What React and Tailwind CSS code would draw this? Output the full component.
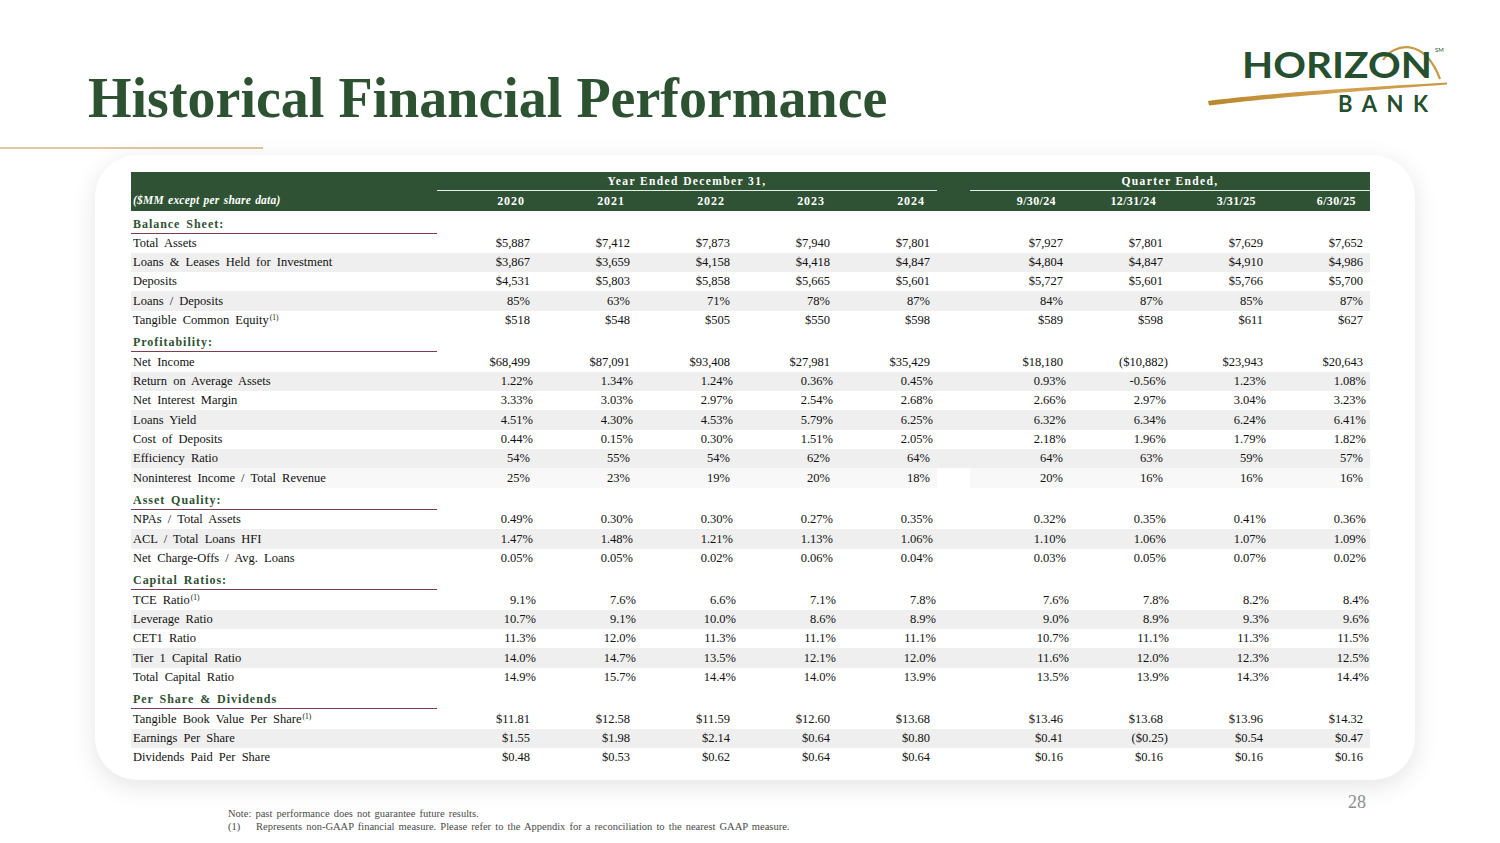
import React from "react";

const sections = [
  {
    name: "Balance Sheet:",
    rows: [
      { label: "Total Assets", values: ["$5,887", "$7,412", "$7,873", "$7,940", "$7,801", "$7,927", "$7,801", "$7,629", "$7,652"] },
      { label: "Loans & Leases Held for Investment", shade: "dark", values: ["$3,867", "$3,659", "$4,158", "$4,418", "$4,847", "$4,804", "$4,847", "$4,910", "$4,986"] },
      { label: "Deposits", values: ["$4,531", "$5,803", "$5,858", "$5,665", "$5,601", "$5,727", "$5,601", "$5,766", "$5,700"] },
      { label: "Loans / Deposits", shade: "dark", values: ["85%", "63%", "71%", "78%", "87%", "84%", "87%", "85%", "87%"] },
      { label: "Tangible Common Equity", sup: true, values: ["$518", "$548", "$505", "$550", "$598", "$589", "$598", "$611", "$627"] },
    ],
  },
  {
    name: "Profitability:",
    rows: [
      { label: "Net Income", values: ["$68,499", "$87,091", "$93,408", "$27,981", "$35,429", "$18,180", "($10,882)", "$23,943", "$20,643"] },
      { label: "Return on Average Assets", shade: "dark", values: ["1.22%", "1.34%", "1.24%", "0.36%", "0.45%", "0.93%", "-0.56%", "1.23%", "1.08%"] },
      { label: "Net Interest Margin", values: ["3.33%", "3.03%", "2.97%", "2.54%", "2.68%", "2.66%", "2.97%", "3.04%", "3.23%"] },
      { label: "Loans Yield", shade: "dark", values: ["4.51%", "4.30%", "4.53%", "5.79%", "6.25%", "6.32%", "6.34%", "6.24%", "6.41%"] },
      { label: "Cost of Deposits", values: ["0.44%", "0.15%", "0.30%", "1.51%", "2.05%", "2.18%", "1.96%", "1.79%", "1.82%"] },
      { label: "Efficiency Ratio", shade: "dark", values: ["54%", "55%", "54%", "62%", "64%", "64%", "63%", "59%", "57%"] },
      { label: "Noninterest Income / Total Revenue", shade: "light", values: ["25%", "23%", "19%", "20%", "18%", "20%", "16%", "16%", "16%"] },
    ],
  },
  {
    name: "Asset Quality:",
    rows: [
      { label: "NPAs / Total Assets", values: ["0.49%", "0.30%", "0.30%", "0.27%", "0.35%", "0.32%", "0.35%", "0.41%", "0.36%"] },
      { label: "ACL / Total Loans HFI", shade: "dark", values: ["1.47%", "1.48%", "1.21%", "1.13%", "1.06%", "1.10%", "1.06%", "1.07%", "1.09%"] },
      { label: "Net Charge-Offs / Avg. Loans", values: ["0.05%", "0.05%", "0.02%", "0.06%", "0.04%", "0.03%", "0.05%", "0.07%", "0.02%"] },
    ],
  },
  {
    name: "Capital Ratios:",
    rows: [
      { label: "TCE Ratio", sup: true, values: ["9.1%", "7.6%", "6.6%", "7.1%", "7.8%", "7.6%", "7.8%", "8.2%", "8.4%"] },
      { label: "Leverage Ratio", shade: "dark", values: ["10.7%", "9.1%", "10.0%", "8.6%", "8.9%", "9.0%", "8.9%", "9.3%", "9.6%"] },
      { label: "CET1 Ratio", values: ["11.3%", "12.0%", "11.3%", "11.1%", "11.1%", "10.7%", "11.1%", "11.3%", "11.5%"] },
      { label: "Tier 1 Capital Ratio", shade: "dark", values: ["14.0%", "14.7%", "13.5%", "12.1%", "12.0%", "11.6%", "12.0%", "12.3%", "12.5%"] },
      { label: "Total Capital Ratio", values: ["14.9%", "15.7%", "14.4%", "14.0%", "13.9%", "13.5%", "13.9%", "14.3%", "14.4%"] },
    ],
  },
  {
    name: "Per Share & Dividends",
    rows: [
      { label: "Tangible Book Value Per Share", sup: true, values: ["$11.81", "$12.58", "$11.59", "$12.60", "$13.68", "$13.46", "$13.68", "$13.96", "$14.32"] },
      { label: "Earnings Per Share", shade: "dark", values: ["$1.55", "$1.98", "$2.14", "$0.64", "$0.80", "$0.41", "($0.25)", "$0.54", "$0.47"] },
      { label: "Dividends Paid Per Share", values: ["$0.48", "$0.53", "$0.62", "$0.64", "$0.64", "$0.16", "$0.16", "$0.16", "$0.16"] },
    ],
  },
];

const years = ["2020", "2021", "2022", "2023", "2024"];
const quarters = ["9/30/24", "12/31/24", "3/31/25", "6/30/25"];

const cols = "grid grid-cols-[306px_repeat(5,100px)_33px_repeat(4,100px)]";

// keeps numbers lined up the way the accounting format does
function pad(v) {
  if (v.startsWith("(")) return "pr-[2px]";
  if (v.startsWith("$")) return "pr-[7px]";
  if (/^\d+%$/.test(v)) return "pr-[7px]";
  if (/^-?\d+\.\d%$/.test(v)) return "pr-[1px]";
  return "pr-[4px]";
}

function Logo() {
  return (
    <svg width="255" height="85" viewBox="0 0 255 85">
      <defs>
        <linearGradient id="swoosh" x1="0" x2="1" y1="0" y2="0">
          <stop offset="0" stopColor="#b7862c" />
          <stop offset="0.55" stopColor="#d3a252" />
          <stop offset="1" stopColor="#c9983f" />
        </linearGradient>
      </defs>
      <path d="M183 25 C 194 8, 224 2, 240 44" fill="none" stroke="#c99a45" strokeWidth="2.2" />
      <text
        x="42"
        y="43"
        fontFamily="Lato, 'Open Sans', sans-serif"
        fontWeight="700"
        fontSize="36"
        fill="#254f2e"
        textLength="190"
        lengthAdjust="spacingAndGlyphs"
      >
        HORIZON
      </text>
      <path d="M8 66 C 60 59, 150 53, 247 47.5 L 247 49.5 C 150 56.5, 60 64, 9 70.5 Z" fill="url(#swoosh)" />
      <text
        x="138"
        y="77"
        fontFamily="Lato, 'Open Sans', sans-serif"
        fontWeight="700"
        fontSize="22"
        fill="#254f2e"
        textLength="90"
        lengthAdjust="spacing"
      >
        BANK
      </text>
      <text x="235" y="17" fontFamily="Lato, sans-serif" fontSize="6" fill="#254f2e">
        SM
      </text>
    </svg>
  );
}

function DataRow({ row }) {
  const bg =
    row.shade === "dark" ? "bg-[#efefef]" : row.shade === "light" ? "bg-[#f8f8f8]" : "";
  return (
    <div className={`${cols} h-[19.3px] items-center text-[12.5px] text-[#111] ${bg}`}>
      <div className="pl-[2px] leading-none [word-spacing:3px]">
        {row.label}
        {row.sup && <span className="relative -top-[4px] ml-[1px] text-[7.5px] [word-spacing:0px]">(1)</span>}
      </div>
      {row.values.slice(0, 5).map((v, i) => (
        <div key={i} className={`text-right ${pad(v)}`}>
          {v}
        </div>
      ))}
      <div className={`h-full ${row.shade === "light" ? "bg-white" : ""}`} />
      {row.values.slice(5).map((v, i) => (
        <div key={i} className={`text-right ${pad(v)}`}>
          {v}
        </div>
      ))}
    </div>
  );
}

function Section({ section }) {
  return (
    <div>
      <div className={`${cols} h-[22.5px]`}>
        <div className="flex items-end border-b-[1.5px] border-[#7d3c4f] pb-[2px] pl-[2px] text-[12px] font-bold leading-[14px] tracking-[0.08em] text-[#2e5233] [word-spacing:2px]">
          {section.name}
        </div>
      </div>
      {section.rows.map((row) => (
        <DataRow key={row.label} row={row} />
      ))}
    </div>
  );
}

export default function App() {
  return (
    <div className="h-[843px] w-[1500px] overflow-hidden bg-white font-['Liberation_Serif','Times_New_Roman',serif]">
      <header className="flex h-[147px] items-start justify-between">
        <h1 className="pl-[88px] pt-[70px] text-[56px] font-bold leading-none text-[#2c5232]">
          Historical Financial Performance
        </h1>
        <div className="pr-[45px] pt-[35px]">
          <Logo />
        </div>
      </header>
      <div className="h-[2px] w-[263px] bg-[#ddc89f]" />

      <div className="ml-[95px] mt-[6px] h-[625px] w-[1320px] rounded-[42px] bg-white pl-[36px] pt-[17px] shadow-[0_6px_26px_rgba(0,0,0,0.11)]">
        <div className="w-[1239px]">
          <div className="bg-[#2e5233] text-white">
            <div className={`${cols} h-[19px]`}>
              <div />
              <div className="col-span-5 flex items-end justify-center border-b border-[#e6ece6] pb-[2px] text-[11.5px] font-bold leading-[14px] tracking-[0.12em]">
                Year Ended December 31,
              </div>
              <div />
              <div className="col-span-4 flex items-end justify-center border-b border-[#e6ece6] pb-[2px] text-[11.5px] font-bold leading-[14px] tracking-[0.12em]">
                Quarter Ended,
              </div>
            </div>
            <div className={`${cols} h-[20px] items-center`}>
              <div className="pl-[2px] text-[11.5px] font-bold italic tracking-[0.02em] [word-spacing:1px]">
                ($MM except per share data)
              </div>
              {years.map((y) => (
                <div key={y} className="pr-[12px] text-right text-[12px] font-bold tracking-[0.08em]">
                  {y}
                </div>
              ))}
              <div />
              {quarters.map((q) => (
                <div key={q} className="pr-[14px] text-right text-[12px] font-bold tracking-[0.03em]">
                  {q}
                </div>
              ))}
            </div>
          </div>
          {sections.map((s) => (
            <Section key={s.name} section={s} />
          ))}
        </div>
      </div>

      <footer className="flex items-start justify-between">
        <div className="pl-[228px] pt-[27px] text-[10.5px] leading-[13px] text-[#4a4a4a] [word-spacing:1.5px]">
          <div>Note: past performance does not guarantee future results.</div>
          <div className="flex">
            <span className="w-[28px]">(1)</span>
            <span>
              Represents non-GAAP financial measure. Please refer to the Appendix for a reconciliation to the nearest GAAP measure.
            </span>
          </div>
        </div>
        <div className="pr-[134px] pt-[13px] text-[18px] leading-none text-[#8c8c8c]">28</div>
      </footer>
    </div>
  );
}
